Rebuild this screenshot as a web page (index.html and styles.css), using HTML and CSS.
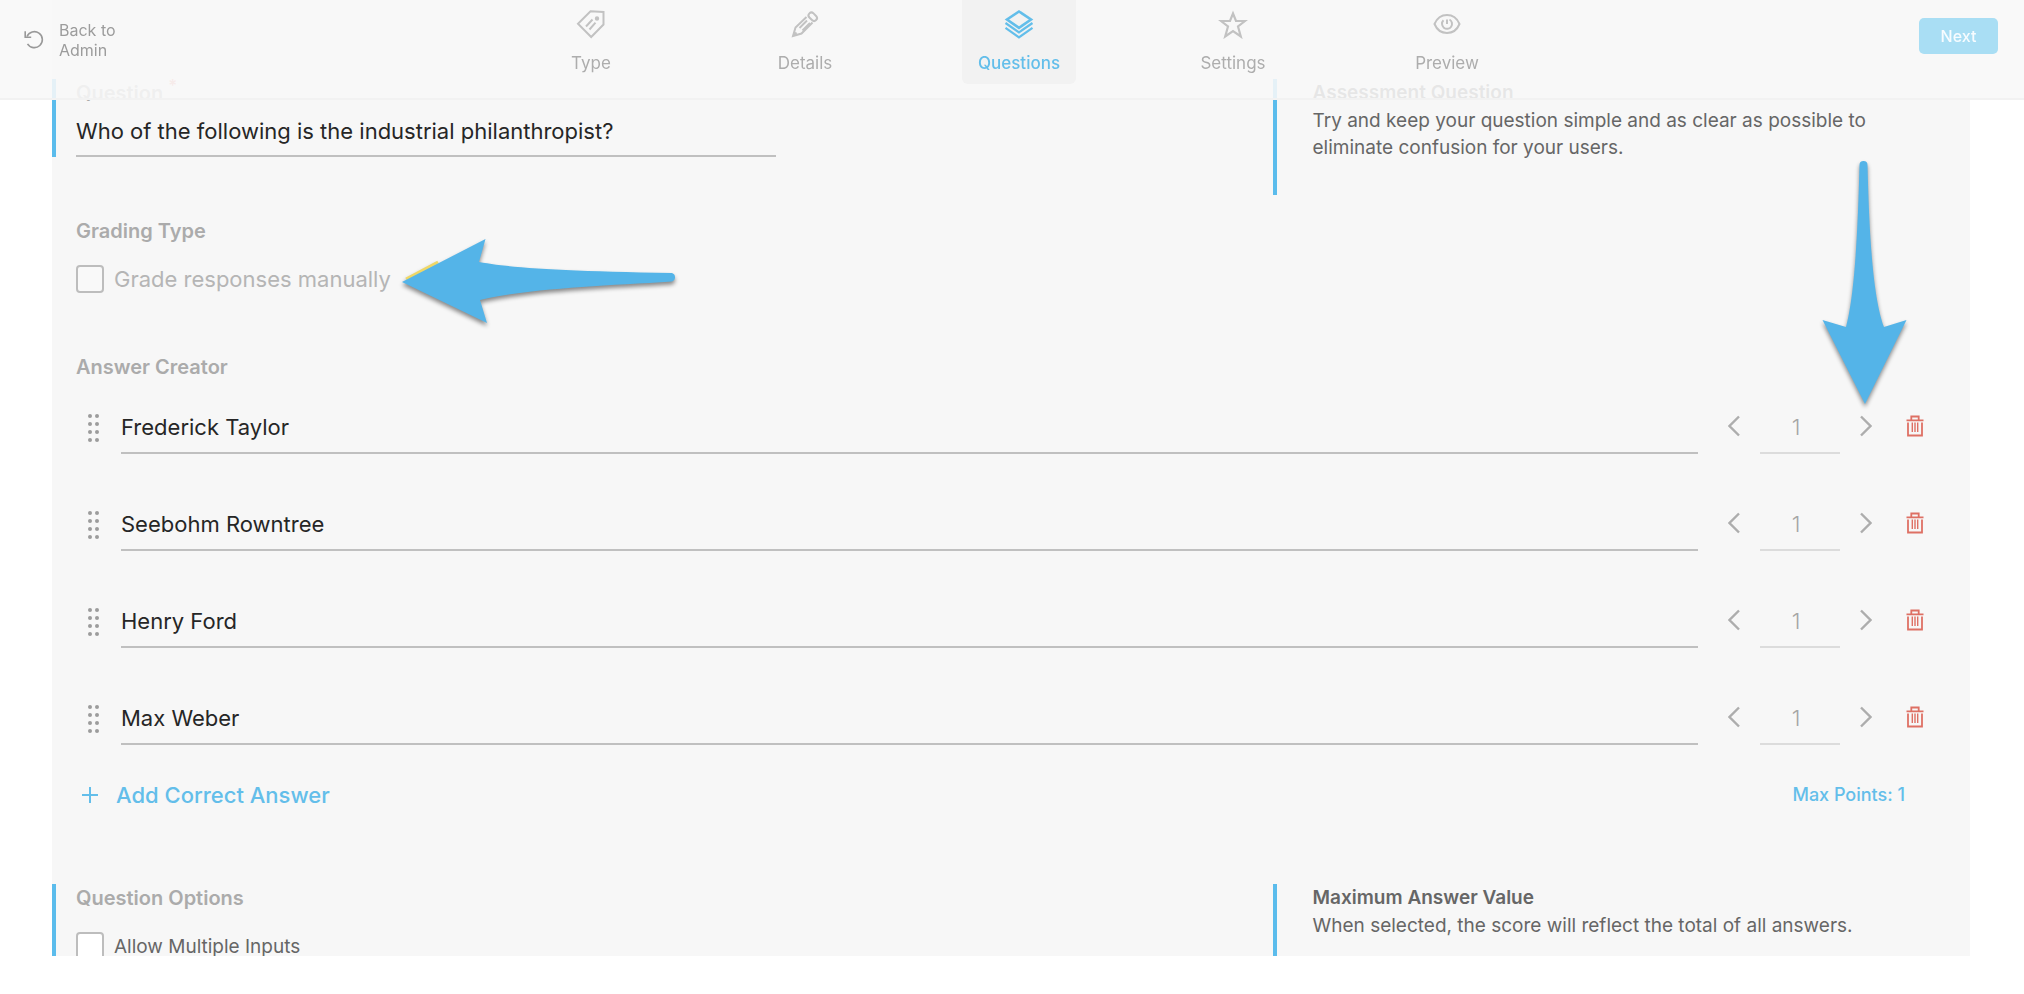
FILE: index.html
```html
<!DOCTYPE html>
<html lang="en">
<head>
<meta charset="UTF-8" />
<meta name="viewport" content="width=device-width, initial-scale=1" />
<title>Assessment - Questions</title>
<link rel="stylesheet" href="styles.css">
</head>
<body>

<!-- shared icons -->
<svg class="sprite" aria-hidden="true">
  <symbol id="drag" viewBox="0 0 12 28">
    <g fill="#9c9c9c">
      <circle cx="2" cy="2" r="2"/><circle cx="9" cy="2" r="2"/>
      <circle cx="2" cy="10" r="2"/><circle cx="9" cy="10" r="2"/>
      <circle cx="2" cy="18" r="2"/><circle cx="9" cy="18" r="2"/>
      <circle cx="2" cy="26" r="2"/><circle cx="9" cy="26" r="2"/>
    </g>
  </symbol>
  <symbol id="prev" viewBox="0 0 12 22"><path d="M11 1.500L1.500 11l9.500 9.500" fill="none" stroke="#adadad" stroke-width="2.400"/></symbol>
  <symbol id="next" viewBox="0 0 12 22"><path d="M1 1.500L10.500 11 1 20.500" fill="none" stroke="#adadad" stroke-width="2.400"/></symbol>
  <symbol id="trash" viewBox="0 0 18 22">
    <g fill="none" stroke="#de7064" stroke-width="1.800">
      <path d="M0.500 5.300h17M5.300 5V1.500h7.400V5M2 7.500v13h14v-13"/>
      <path d="M6.300 7.500v9.500M9 7.500v9.500M11.700 7.500v9.500" stroke-width="1.400"/>
    </g>
  </symbol>
</svg>

<header class="topbar">
  <a class="back" href="#">
    <svg width="20" height="20" viewBox="0 0 20 20" fill="none" stroke="#999" stroke-width="1.600">
      <path d="M3 6.500A8 8 0 1 1 3.500 13.800"/>
      <path d="M1.200 1.200V7.200H7.200"/>
    </svg>
    <span>Back to<br>Admin</span>
  </a>

  <nav class="steps">
    <a class="step" href="#">
      <svg width="30" height="30" viewBox="0 0 30 30" fill="none" stroke="#c2c2c2" stroke-width="2">
        <path d="M14.500 2.200L27.500 3 27.500 15.500 15.200 28 2 14.800z"/>
        <path d="M10 17.500l6.500-7M13.500 20.500l6-6.800"/>
        <circle cx="21" cy="9.500" r="1.200" fill="#c2c2c2"/>
      </svg>
      Type
    </a>
    <a class="step" href="#">
      <svg width="30" height="30" viewBox="0 0 30 30" fill="none" stroke="#c2c2c2" stroke-width="2">
        <path d="M16.500 8L5.500 18.500 3 27 11.500 24.500 22.500 13.500"/>
        <path d="M9.500 19L17 11.500M12.500 21.500L20 14M3.500 26.500l3-3"/>
        <rect x="18" y="4.800" width="9.500" height="5.800" rx="2.900" transform="rotate(45 22.750 7.700)"/>
      </svg>
      Details
    </a>
    <a class="step active" href="#">
      <svg width="30" height="30" viewBox="0 0 30 30" fill="none" stroke="#63beea" stroke-width="2">
        <path d="M15 2.500L27 10.500 15 18.800 3 10.500z" stroke-width="2.600"/>
        <path d="M1.500 14L15 23.300 28.500 14M1.500 18.800L15 28.300 28.500 18.800" stroke-width="2.200"/>
      </svg>
      Questions
    </a>
    <a class="step" href="#">
      <svg width="30" height="30" viewBox="0 0 30 30" fill="none" stroke="#c2c2c2" stroke-width="2.200">
        <path d="M15 4.500L18 12H27L20 17.500 22.800 27.500 15 22 7.200 27.500 10 17.500 3 12H12z"/>
      </svg>
      Settings
    </a>
    <a class="step" href="#">
      <svg width="30" height="30" viewBox="0 0 30 30" fill="none" stroke="#c2c2c2" stroke-width="2">
        <path d="M2.500 15C5 9 9.500 6 15 6s10 3 12.500 9c-2.500 6-7 9-12.500 9S5 21 2.500 15z"/>
        <path d="M11.500 11.300a5 5 0 1 0 6-.8M15 10.500v4.500"/>
      </svg>
      Preview
    </a>
  </nav>

  <button class="next-btn" type="button">Next</button>
</header>

<main class="panel">
  <section class="split">
    <div class="marked">
      <label class="heading" for="question">Question <sup class="required">*</sup></label>
      <input class="field question" type="text" id="question" value="Who of the following is the industrial philanthropist?" />
    </div>
    <aside class="marked hint">
      <h2>Assessment Question</h2>
      <p>Try and keep your question simple and as clear as possible to eliminate confusion for your users.</p>
    </aside>
  </section>

  <section class="grading">
    <h2 class="heading">Grading Type</h2>
    <div class="check muted">
      <input type="checkbox" id="manual" />
      <label for="manual">Grade responses manually</label>
      <svg class="arrow arrow-left" width="290" height="100" viewBox="0 0 290 100" aria-hidden="true">
        <path d="M14 49L46 32" stroke="#efd766" stroke-width="3"/>
        <path d="M10 52L93.500 9 87 32C120 38 170 41 280 43a4.500 4.500 0 0 1 0 8.500C210 56 140 58 88 70L95 93z" fill="#54b4e8"/>
      </svg>
    </div>
  </section>

  <section class="answers">
    <h2 class="heading">Answer Creator</h2>
    <svg class="arrow arrow-down" width="100" height="260" viewBox="0 0 100 260" aria-hidden="true">
      <path d="M49.500 15a4 4 0 0 1 8 0C59 75 62 145 74 177L96.500 170 55 254 12.500 170 36 177C45 145 48 75 49.500 15z" fill="#54b4e8"/>
    </svg>
    <ul class="answer-list">
      <li class="answer">
        <button class="drag" type="button" aria-label="Move"><svg width="12" height="28"><use href="#drag"/></svg></button>
        <input class="field" type="text" aria-label="Answer 1" value="Frederick Taylor" />
        <div class="points">
          <button class="icon-btn" type="button" aria-label="Fewer points"><svg width="12" height="22"><use href="#prev"/></svg></button>
          <input class="field" type="text" inputmode="numeric" aria-label="Points" value="1" />
          <button class="icon-btn" type="button" aria-label="More points"><svg width="12" height="22"><use href="#next"/></svg></button>
        </div>
        <button class="icon-btn" type="button" aria-label="Delete"><svg width="18" height="22"><use href="#trash"/></svg></button>
      </li>
      <li class="answer">
        <button class="drag" type="button" aria-label="Move"><svg width="12" height="28"><use href="#drag"/></svg></button>
        <input class="field" type="text" aria-label="Answer 2" value="Seebohm Rowntree" />
        <div class="points">
          <button class="icon-btn" type="button" aria-label="Fewer points"><svg width="12" height="22"><use href="#prev"/></svg></button>
          <input class="field" type="text" inputmode="numeric" aria-label="Points" value="1" />
          <button class="icon-btn" type="button" aria-label="More points"><svg width="12" height="22"><use href="#next"/></svg></button>
        </div>
        <button class="icon-btn" type="button" aria-label="Delete"><svg width="18" height="22"><use href="#trash"/></svg></button>
      </li>
      <li class="answer">
        <button class="drag" type="button" aria-label="Move"><svg width="12" height="28"><use href="#drag"/></svg></button>
        <input class="field" type="text" aria-label="Answer 3" value="Henry Ford" />
        <div class="points">
          <button class="icon-btn" type="button" aria-label="Fewer points"><svg width="12" height="22"><use href="#prev"/></svg></button>
          <input class="field" type="text" inputmode="numeric" aria-label="Points" value="1" />
          <button class="icon-btn" type="button" aria-label="More points"><svg width="12" height="22"><use href="#next"/></svg></button>
        </div>
        <button class="icon-btn" type="button" aria-label="Delete"><svg width="18" height="22"><use href="#trash"/></svg></button>
      </li>
      <li class="answer">
        <button class="drag" type="button" aria-label="Move"><svg width="12" height="28"><use href="#drag"/></svg></button>
        <input class="field" type="text" aria-label="Answer 4" value="Max Weber" />
        <div class="points">
          <button class="icon-btn" type="button" aria-label="Fewer points"><svg width="12" height="22"><use href="#prev"/></svg></button>
          <input class="field" type="text" inputmode="numeric" aria-label="Points" value="1" />
          <button class="icon-btn" type="button" aria-label="More points"><svg width="12" height="22"><use href="#next"/></svg></button>
        </div>
        <button class="icon-btn" type="button" aria-label="Delete"><svg width="18" height="22"><use href="#trash"/></svg></button>
      </li>
    </ul>
    <div class="answers-footer">
      <button class="add" type="button">
        <svg width="18" height="18" viewBox="0 0 18 18"><path d="M9 1v16M1 9h16" stroke="#63beea" stroke-width="2"/></svg>
        Add Correct Answer
      </button>
      <span class="max-points">Max Points: 1</span>
    </div>
  </section>

  <section class="split options">
    <div class="marked">
      <h2 class="heading">Question Options</h2>
      <div class="check">
        <input type="checkbox" id="multiple" />
        <label for="multiple">Allow Multiple Inputs</label>
      </div>
    </div>
    <aside class="marked hint">
      <h2>Maximum Answer Value</h2>
      <p>When selected, the score will reflect the total of all answers.</p>
    </aside>
  </section>
</main>

</body>
</html>
```
FILE: styles.css
```css
* {
  box-sizing: border-box;
}
body {
  margin: 0;
  background: #fff;
  color: #666;
  font-family: Inter, "Open Sans", sans-serif;
  font-size: 19px;
}
h2, p, ul {
  margin: 0;
  padding: 0;
}
button {
  font-family: inherit;
  border: none;
  background: none;
  padding: 0;
  cursor: pointer;
}
a {
  color: inherit;
  text-decoration: none;
}
svg {
  display: block;
  flex: none;
}
.sprite {
  position: absolute;
  width: 0;
  height: 0;
}

/* top bar, stays over the scrolled form */
.topbar {
  position: fixed;
  top: 0;
  left: 0;
  right: 0;
  z-index: 2;
  height: 100px;
  padding: 0 10px 0 24px;
  display: grid;
  grid-template-columns: 1fr auto 1fr;
  align-items: start;
  background: rgba(248, 248, 248, 0.88);
  border-bottom: 2px solid #f2f2f2;
}
.back {
  display: flex;
  align-items: center;
  gap: 15px;
  padding-top: 20px;
  color: #9c9c9c;
  font-size: 16px;
  line-height: 20px;
}
.steps {
  display: flex;
  gap: 100px;
}
.step {
  width: 114px;
  height: 84px;
  padding-top: 9px;
  display: flex;
  flex-direction: column;
  align-items: center;
  gap: 14px;
  border-radius: 0 0 6px 6px;
  color: #adadad;
  font-size: 17px;
  line-height: 20px;
}
.step.active {
  background: #f2f2f2;
  color: #63beea;
  font-weight: 500;
}
.next-btn {
  justify-self: end;
  width: 79px;
  height: 36px;
  margin: 18px 16px 0 0;
  border-radius: 5px;
  background: #a9def4;
  color: #f7fcff;
  font-size: 16px;
  font-weight: 500;
}

/* form */
.panel {
  height: calc(100vh - 38px);
  margin: 0 54px 0 52px;
  padding-top: 79px;
  overflow: hidden;
  background: #f7f7f7;
}
.split {
  display: grid;
  grid-template-columns: 7fr 4fr;
  align-items: start;
}
.marked {
  border-left: 4px solid #5bbcec;
  padding-left: 20px;
}
.heading {
  display: block;
  color: #ababab;
  font-size: 20px;
  font-weight: 600;
  line-height: 28px;
}
.required {
  color: #e58a80;
  line-height: 0;
}
.field {
  width: 100%;
  height: 52px;
  padding: 0;
  border: none;
  border-bottom: 2px solid #c0c0c0;
  border-radius: 0;
  outline: none;
  background: none;
  color: #262626;
  font-family: inherit;
  font-size: 22px;
}
.question {
  display: block;
  max-width: 700px;
  height: 50px;
}
.hint {
  padding: 0 80px 34px 36px;
  line-height: 27px;
}
.hint h2 {
  font-size: 19px;
  font-weight: 600;
  line-height: 28px;
}
.grading {
  padding: 22px 46px 0 24px;
}
.check {
  position: relative;
  display: flex;
  align-items: center;
  gap: 10px;
  margin-top: 20px;
}
.check input {
  appearance: none;
  width: 28px;
  height: 28px;
  margin: 0;
  border: 2px solid #bdbdbd;
  border-radius: 4px;
  background: #fff;
}
.check.muted {
  color: #b5b5b5;
  font-size: 22px;
}
.check.muted input {
  background: #f9f9f9;
}
.answers {
  position: relative;
  padding: 60px 46px 0 24px;
}
.answer-list {
  list-style: none;
  display: flex;
  flex-direction: column;
  gap: 45px;
  margin-top: 21px;
}
.answer {
  display: flex;
  align-items: center;
}
.drag {
  width: 45px;
  padding-left: 12px;
}
.icon-btn {
  padding-bottom: 4px;
}
.answer > .field {
  flex: 1;
  min-width: 0;
}
.points {
  display: flex;
  align-items: center;
  gap: 20px;
  margin: 0 34px 0 30px;
}
.points .field {
  width: 80px;
  padding-right: 8px;
  border-color: #dcdcdc;
  color: #a6a6a6;
  font-weight: 300;
  text-align: center;
}
.answers-footer {
  display: flex;
  justify-content: space-between;
  align-items: center;
  margin-top: 37px;
  padding-right: 19px;
  color: #63beea;
  line-height: 26px;
}
.add {
  display: flex;
  align-items: center;
  gap: 17px;
  padding-left: 5px;
  color: inherit;
  font-size: 22px;
  font-weight: 500;
  line-height: 26px;
}
.max-points {
  font-size: 18px;
  font-weight: 500;
}
.options {
  padding-top: 76px;
}

/* pointer arrows */
.arrow {
  position: absolute;
  z-index: 1;
  filter: drop-shadow(0 3px 2px rgba(0, 0, 0, 0.45));
  pointer-events: none;
}
.arrow-left {
  left: 316px;
  top: -35px;
}
.arrow-down {
  right: 60px;
  top: -143px;
}
```
